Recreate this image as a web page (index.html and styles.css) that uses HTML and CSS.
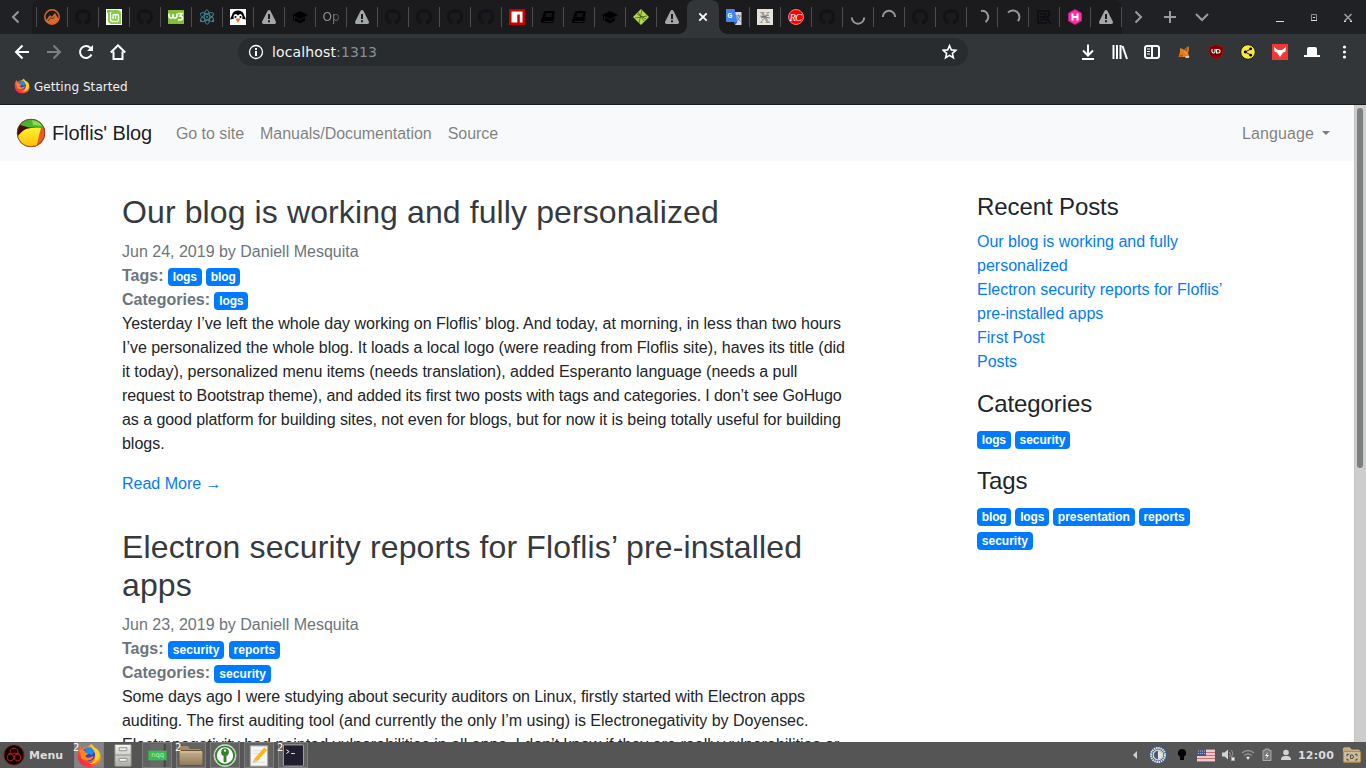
FILE: index.html
```html
<!DOCTYPE html>
<html lang="en">
<head>
<meta charset="utf-8">
<title>Floflis' Blog</title>
<link rel="stylesheet" href="styles.css">
</head>
<body>
<svg class="defs" width="0" height="0">
  <defs>
    <linearGradient id="fx" x1="1" y1="0" x2="0" y2="1"><stop offset="0" stop-color="#ffe92e"/><stop offset=".35" stop-color="#ff9a1c"/><stop offset=".7" stop-color="#ff3b3a"/><stop offset="1" stop-color="#e3166f"/></linearGradient>
    <linearGradient id="metal" x1="0" y1="0" x2="0" y2="1"><stop offset="0" stop-color="#f4f4f2"/><stop offset="1" stop-color="#aaaaa6"/></linearGradient>
    <linearGradient id="tan" x1="0" y1="0" x2="0" y2="1"><stop offset="0" stop-color="#c9b28e"/><stop offset="1" stop-color="#8e7a5d"/></linearGradient>
    <linearGradient id="yel" x1="0" y1="0" x2="0" y2="1"><stop offset="0" stop-color="#fff22e"/><stop offset="1" stop-color="#ffb800"/></linearGradient>
    <symbol id="github" viewBox="0 0 16 16"><path fill="#131314" d="M8 0C3.58 0 0 3.58 0 8c0 3.54 2.29 6.53 5.47 7.59.4.07.55-.17.55-.38v-1.49c-2.01.37-2.53-.49-2.69-.94-.09-.23-.48-.94-.82-1.13-.28-.15-.68-.52-.01-.53.63-.01 1.08.58 1.23.82.72 1.21 1.87.87 2.33.66.07-.52.28-.87.51-1.07-1.78-.2-3.64-.89-3.64-3.95 0-.87.31-1.59.82-2.15-.08-.2-.36-1.02.08-2.12 0 0 .67-.21 2.2.82a7.6 7.6 0 0 1 4 0c1.53-1.04 2.2-.82 2.2-.82.44 1.1.16 1.92.08 2.12.51.56.82 1.27.82 2.15 0 3.07-1.87 3.75-3.65 3.95.29.25.54.73.54 1.48v2.2c0 .21.15.46.55.38A8 8 0 0 0 16 8c0-4.42-3.58-8-8-8z"/></symbol>
    <symbol id="warn" viewBox="0 0 16 16"><path fill="#a4a7aa" fill-rule="evenodd" d="M8 1c.7 0 1.2.4 1.500 1l5.300 10.600c.6 1.300-.1 2.400-1.400 2.400H2.600c-1.300 0-2-1.100-1.400-2.400L6.500 2C6.800 1.400 7.300 1 8 1zM7 5v5h2V5zm0 6.200v2h2v-2z"/></symbol>
    <symbol id="cap" viewBox="0 0 16 16"><path fill="#000" d="M8 2l8 4-8 4-8-4zM3 8.500l5 2.500 5-2.500V12l-5 2.500L3 12zM1 6.500h1v5H1z"/></symbol>
    <symbol id="book" viewBox="0 0 16 16"><path fill="#000" d="M5 2h9l1 1-2.500 9H4c-1 0-1 1 0 1h8.500l1.500-5 .8.500-1.800 5.500H3c-2 0-2.500-1.500-2-2.500L4 3z"/><path stroke="#2a2a2b" d="M6 5h6M5.500 7h6"/></symbol>
    <symbol id="firefox" viewBox="0 0 24 24"><path fill="url(#fx)" d="M14 1c2 1 3 3 3.500 4C20 5 24 9 23 15c-1 5-5 8-11 8C5 23 1 18 1 12c0-4 1-7 3-9l1 3 3-2c3 0 4-1 6-3z"/><circle cx="11.500" cy="11" r="6.500" fill="#3a3fc0"/><path fill="#1c8cf0" d="M8 5.500c4-3 8-1 9 3l-2 3-6-2z"/><path fill="#ff8518" d="M3 7c4-1 5.500 0 5.500 2l3 1-3 2.500c2 3 5 1 8 0-1 5-9 6-12 2z"/><path fill="#ffcf2a" d="M14 1c0 4 4 6 4 11 0 5-2 7-6 8 9 1 12-8 9-12-2-4-5-3-7-7z"/></symbol>
    <symbol id="folder" viewBox="0 0 28 24"><path fill="#a18b69" stroke="#6f5e45" d="M2 5V3q0-1 1-1h8l2 3h11v4H2z"/><rect x="2" y="7" width="24" height="15" rx="1.500" fill="url(#tan)" stroke="#65573f"/><path d="M3 8.500h22" stroke="#d9c7a5"/></symbol>
    <symbol id="desk" viewBox="0 0 28 24"><path fill="#c5a97c" stroke="#e2c89c" d="M2 5V3q0-1 1-1h8l2 3h11v4H2z"/><rect x="2" y="7" width="24" height="15" rx="1.500" fill="#cbbda2" stroke="#b98a45" stroke-width="1.500"/><path d="M7 14v-3h3m8 0h3v3m0 3v2h-3m-8 0H7v-2" fill="none" stroke="#4b3e2a" stroke-width="1.300"/><path d="M12 12h2q2 0 2 2.500T14 17h-2z" fill="none" stroke="#4b3e2a" stroke-width="1.300"/></symbol>
  </defs>
</svg>

<header class="browser">
  <div class="tabstrip">
    <div class="scroll-left"><svg width="16" height="16" fill="none" stroke="#97999c" stroke-width="2"><path d="M10.500 2.500L5 8l5.500 5.500"/></svg></div>
    <div class="tabs">
      <div class="tab"><svg viewBox="0 0 16 16"><circle cx="8" cy="8" r="7.200" fill="none" stroke="#dc682e" stroke-width="1.500"/><path fill="#dc682e" d="M1.500 12L6 6l1.700 1.700L11 4l3.500 6-2 3.500L8 15l-4-1z"/><path d="M4 12l3-3.500L8.500 10l2-2.500" fill="none" stroke="#1b1b1d" stroke-width=".7"/></svg></div>
      <div class="tab"><svg><use href="#github"/></svg></div>
      <div class="tab"><svg viewBox="0 0 16 16"><path fill="#fff" d="M0 0h16v16H0z"/><path fill="#86cb43" d="M1 1h10q4 0 4 4v10H6q-4 0-4-4V4H1z"/><path d="M4.500 3v7q0 2.500 2.500 2.500h4q1.500 0 1.500-1.500V6.500q0-1-1.500-1t-1.500 1V10M10 6.500q0-1-1.500-1T7 6.500V10" fill="none" stroke="#fff" stroke-width="1.300"/></svg></div>
      <div class="tab"><svg><use href="#github"/></svg></div>
      <div class="tab"><svg viewBox="0 0 16 16"><path fill="#83bd38" d="M0 1h16v14H0z"/><path d="M1 4.500v2q0 2.500 2 2.500t2-2.500V5v1.500Q5 9 7 9t2-2.500v-2M10 4.500h4l-2 2.500q2.500 0 2.500 2T12 11h-2" fill="none" stroke="#fff" stroke-width="1.600"/></svg></div>
      <div class="tab"><svg viewBox="0 0 16 16" fill="none" stroke="#458b9b" stroke-width=".9"><ellipse cx="8" cy="8" rx="7.200" ry="2.700" transform="rotate(28 8 8)"/><ellipse cx="8" cy="8" rx="7.200" ry="2.700" transform="rotate(88 8 8)"/><ellipse cx="8" cy="8" rx="7.200" ry="2.700" transform="rotate(150 8 8)"/><circle cx="8" cy="8" r=".7"/><circle cx="2" cy="12" r=".8"/><circle cx="14" cy="12" r=".8"/></svg></div>
      <div class="tab"><svg viewBox="0 0 16 16"><path fill="#fff" d="M0 0h16v16H0z"/><path d="M0 10.500L2 6Q3 1.500 8 1.500T14 6l2 4.500-2.500-.5H2.500z"/><path fill="#fff" d="M3.500 8.500Q3.500 5 6 5l2 1.500L10 5q2.500 0 2.500 3.500 0 4-4.500 4.500-4.500-.5-4.500-4.500z"/><circle cx="5.500" cy="8" r="1"/><circle cx="10.500" cy="8" r="1"/><path fill="#ed7525" d="M5.500 9.500h5L8 14z"/></svg></div>
      <div class="tab"><svg><use href="#warn"/></svg></div>
      <div class="tab"><svg><use href="#cap"/></svg></div>
      <div class="tab tab-text">Op</div>
      <div class="tab"><svg><use href="#warn"/></svg></div>
      <div class="tab"><svg><use href="#github"/></svg></div>
      <div class="tab"><svg><use href="#github"/></svg></div>
      <div class="tab"><svg><use href="#github"/></svg></div>
      <div class="tab"><svg><use href="#github"/></svg></div>
      <div class="tab"><svg viewBox="0 0 16 16"><path fill="#c00" d="M0 0h16v16H0z"/><path fill="#fff" d="M2.500 2.500h11v11h-2.700V5.500H8.300v8H2.500z"/></svg></div>
      <div class="tab"><svg><use href="#book"/></svg></div>
      <div class="tab"><svg><use href="#book"/></svg></div>
      <div class="tab"><svg><use href="#cap"/></svg></div>
      <div class="tab"><svg viewBox="0 0 16 16"><path fill="#b6d84c" d="M8 0l8 8-8 8-8-8z"/><path fill="none" stroke="#42601f" stroke-width=".8" d="M5 3l6 9M2 9l12-2M9 1L6 14M4 5l9 5"/></svg></div>
      <div class="tab"><svg><use href="#warn"/></svg></div>
      <div class="tab active"><svg viewBox="0 0 16 16"><path d="M4.300 4.300l7.400 7.400m0-7.400l-7.400 7.400" stroke="#fff" stroke-width="1.900"/></svg></div>
      <div class="tab plain"><svg viewBox="0 0 16 16"><path fill="#d7dadd" d="M7 3h8.500v13H9z"/><path d="M9.500 7H15m-2.500-1.500V7m1.500 0q-1 4-4 5m1-4q1 3 3.500 4" stroke="#6a8792" fill="none"/><path fill="#4284f3" d="M0 0h8.500l3 13H1q-1 0-1-1z"/><path fill="#2b5fc0" d="M8 13h3.500L9 16z"/><text x="1.500" y="9" class="g-mark">G</text></svg></div>
      <div class="tab"><svg viewBox="0 0 16 16"><path fill="#e4e4df" d="M0 0h16v16H0z"/><text x="2" y="14" class="x-mark">X</text><path d="M3 7l10 2M4 9l8-3" stroke="#666" stroke-width=".8"/></svg></div>
      <div class="tab"><svg viewBox="0 0 16 16"><circle cx="8" cy="8" r="7.500" fill="#f00" stroke="#ff7272"/><text x="1.500" y="12" class="rc-mark">RC</text></svg></div>
      <div class="tab"><svg><use href="#github"/></svg></div>
      <div class="tab"><svg viewBox="0 0 16 16"><path class="spin" d="M1.800 8.500a6.200 6.200 0 0 0 12.400 0"/></svg></div>
      <div class="tab"><svg viewBox="0 0 16 16"><path class="spin" d="M1.800 8a6.200 6.200 0 0 1 12.400 0"/></svg></div>
      <div class="tab"><svg><use href="#github"/></svg></div>
      <div class="tab"><svg><use href="#github"/></svg></div>
      <div class="tab"><svg viewBox="0 0 16 16"><path class="spin" d="M7 1.900a6.200 6.200 0 0 1 4.500 11.200"/></svg></div>
      <div class="tab"><svg viewBox="0 0 16 16"><path class="spin" d="M3 3.700a6.200 6.200 0 0 1 9.800 8.500"/></svg></div>
      <div class="tab"><svg viewBox="0 0 16 16" fill="none" stroke="#0c0c0d" stroke-width="1.500"><path d="M11 14H2V2h11v5M4 5h7M4 8h4M4 11h3"/><circle cx="10" cy="9" r="2"/><path d="M11 10l4 5"/></svg></div>
      <div class="tab"><svg viewBox="0 0 16 16"><path fill="#ff2ea6" stroke="#c71886" d="M8 .5l6.500 3.700v7.600L8 15.500l-6.500-3.700V4.200z"/><path d="M5.500 4.500v7m5-7v7m-5-3.500h5" stroke="#fff" stroke-width="2"/></svg></div>
      <div class="tab"><svg><use href="#warn"/></svg></div>
    </div>
    <div class="tab-tools">
      <svg viewBox="0 0 16 16"><path d="M5.500 2.500L11 8l-5.500 5.500"/></svg>
      <svg viewBox="0 0 16 16"><path d="M8 2v12M2 8h12"/></svg>
      <svg viewBox="0 0 16 16"><path d="M2 5l6 6 6-6"/></svg>
    </div>
    <div class="window-buttons">
      <svg viewBox="0 0 16 16"><path d="M4 12.500h8" stroke="#ddd"/></svg>
      <svg viewBox="0 0 16 16"><path d="M5.500 5.500h5v6h-5z" stroke="#8b8e90"/><path d="M5 11.500h6M7 8.500h2" stroke="#ddd"/></svg>
      <svg viewBox="0 0 16 16"><path d="M4.500 5l7 7m0-7l-7 7" stroke="#9a9d9f" stroke-width="1.600"/><path d="M4 12.500h2m4 0h2" stroke="#ddd"/></svg>
    </div>
  </div>

  <div class="toolbar">
    <div class="tools">
      <svg viewBox="0 0 16 16" class="line"><path d="M15 8H2m6.500-6.500L2 8l6.500 6.500"/></svg>
      <svg viewBox="0 0 16 16" class="line dim"><path d="M1 8h13M7.500 1.500L14 8l-6.500 6.500"/></svg>
      <svg viewBox="0 0 16 16" class="line"><path d="M13.500 10.500A6 6 0 1 1 12.500 4"/><path d="M15 1v6H9z" fill="#fff" stroke="none"/></svg>
      <svg viewBox="0 0 16 16" class="line"><path d="M.8 8.500L8 1.300l7.200 7.200M3.500 7.500V15h9V7.500"/></svg>
    </div>
    <div class="urlbar">
      <svg viewBox="0 0 16 16"><circle cx="8" cy="8" r="6.500" fill="none" stroke="#fff" stroke-width="1.300"/><path d="M8 7v5M8 4v2" stroke="#fff" stroke-width="2"/></svg>
      <span class="url">localhost<span>:1313</span></span>
      <svg viewBox="0 0 16 16"><path d="M7.500 1.700l1.800 4.200 4.500.4-3.400 3 1 4.500-3.900-2.400-3.900 2.400 1-4.500-3.400-3 4.500-.4z" fill="none" stroke="#fff" stroke-width="1.600"/></svg>
    </div>
    <div class="tools">
      <svg viewBox="0 0 16 16" class="line"><path d="M8 .5V11M3 6.500l5 5 5-5M2 15h12"/></svg>
      <svg viewBox="0 0 16 16" class="line"><path d="M1.500 1v14M5 1v14M8.500 1v14M10.500 2l4.500 13"/></svg>
      <svg viewBox="0 0 16 16" class="line"><rect x="1" y="2" width="14" height="12" rx="2"/><path d="M8 2v12"/><path d="M3 5h3M3 7.500h3M3 10h3" stroke-width="1.200"/></svg>
      <svg viewBox="0 0 16 16"><path fill="#e87d20" d="M2.500 13L4 8V4l4 1.500L12.500 2l.5 3-1 4 1.500 4H5z"/><path fill="#a3551c" d="M7 6l5-3-1 4zM3 12l4-2-1 3z"/><path fill="#dac8b5" d="M9.500 12H13v2H9.500z"/><path d="M8 7l3 3" stroke="#f0ac55"/></svg>
      <svg viewBox="0 0 16 16"><path fill="#800000" stroke="#a01c1c" stroke-width=".6" d="M8 .5q3 2 7 2V7q0 6-7 8.500Q1 13 1 7V2.500q4 0 7-2z"/><path d="M4 5v2.500q0 1.500 1.500 1.500T7 7.500V5m1.600.5h1.500q2 0 2 1.700T10.200 9H8.600z" fill="none" stroke="#fff" stroke-width="1.100"/></svg>
      <svg viewBox="0 0 16 16"><circle cx="8" cy="8" r="7.300" fill="#fae93d" stroke="#1a1a1a"/><path d="M11 5L5 8l6 3" fill="none" stroke="#222"/><circle cx="10.700" cy="4.800" r="1.400"/><circle cx="5.200" cy="8" r="1.400"/><circle cx="10.700" cy="11.200" r="1.400"/></svg>
      <svg viewBox="0 0 16 16"><path fill="#ef3939" d="M0 0h16v16H0z"/><path fill="#fff" d="M2 3l4 3h4l4-3-.5 4.500-2.500 1L8 13 5 8.500l-2.500-1z"/></svg>
      <svg viewBox="0 0 16 16"><path fill="#fff" d="M3 11V5q0-2 2-2h6q2 0 2 2v6h3v2H0v-2z"/></svg>
      <svg viewBox="0 0 16 16" fill="#fff"><circle cx="8.500" cy="3" r="1.600"/><circle cx="8.500" cy="8" r="1.600"/><circle cx="8.500" cy="13" r="1.600"/></svg>
    </div>
  </div>
  <div class="bookmarks"><svg><use href="#firefox"/></svg><span>Getting Started</span></div>
</header>

<div class="viewport">
  <div class="page">
    <nav class="navbar">
      <a class="brand"><svg viewBox="0 0 30 30"><defs><clipPath id="ball"><circle cx="15" cy="15" r="14"/></clipPath></defs><g clip-path="url(#ball)"><path fill="#460a0c" d="M0 0h30v30H0z"/><path fill="#ed5a20" d="M20 8h10v22H18z"/><path fill="#47b52a" d="M4 7Q9 0 16 0q8 0 12 8l-3 2-12-.5z"/><path fill="#8edb55" d="M16 2l7 2 3 4-9-1z"/><path fill="url(#yel)" d="M10 11q7-2 15-1-2 7-3 12l-2 9H0V21q4-7 10-10z"/></g><circle cx="15" cy="15" r="13.800" fill="none" stroke="#8b3434" stroke-width=".8"/></svg><span>Floflis' Blog</span></a>
      <a>Go to site</a><a>Manuals/Documentation</a><a>Source</a>
      <a class="language">Language</a>
    </nav>
    <div class="container">
      <main>
        <article>
          <h2>Our blog is working and fully personalized</h2>
          <div class="meta">Jun 24, 2019 by Daniell Mesquita<br><b>Tags:</b> <a class="badge short">logs</a> <a class="badge short">blog</a><br><b>Categories:</b> <a class="badge short">logs</a></div>
          <p>Yesterday I’ve left the whole day working on Floflis’ blog. And today, at morning, in less than two hours<br>I’ve personalized the whole blog. It loads a local logo (were reading from Floflis site), haves its title (did<br>it today), personalized menu items (needs translation), added Esperanto language (needs a pull<br><span class="tighter">request to Bootstrap theme), and added its first two posts with tags and categories. I don’t see GoHugo</span><br><span class="tight">as a good platform for building sites, not even for blogs, but for now it is being totally useful for building</span><br>blogs.</p>
          <a class="more">Read More →</a>
        </article>
        <article>
          <h2 class="wide">Electron security reports for Floflis’ pre-installed apps</h2>
          <div class="meta">Jun 23, 2019 by Daniell Mesquita<br><b>Tags:</b> <a class="badge">security</a> <a class="badge">reports</a><br><b>Categories:</b> <a class="badge">security</a></div>
          <p><span class="tight">Some days ago I were studying about security auditors on Linux, firstly started with Electron apps</span><br>auditing. The first auditing tool (and currently the only I’m using) is Electronegativity by Doyensec.<br><span class="loose">Electronegativity had pointed vulnerabilities in all apps. I don’t know if they are really vulnerabilities or</span></p>
        </article>
      </main>
      <aside>
        <section>
          <h4>Recent Posts</h4>
          <ul>
            <li><a>Our blog is working and fully personalized</a></li>
            <li><a>Electron security reports for Floflis’ pre-installed apps</a></li>
            <li><a>First Post</a></li>
            <li><a>Posts</a></li>
          </ul>
        </section>
        <section>
          <h4>Categories</h4>
          <div class="badges"><a class="badge short">logs</a> <a class="badge">security</a></div>
        </section>
        <section>
          <h4>Tags</h4>
          <div class="badges"><a class="badge short">blog</a> <a class="badge short">logs</a> <a class="badge">presentation</a> <a class="badge">reports</a> <a class="badge">security</a></div>
        </section>
      </aside>
    </div>
  </div>
  <div class="scrollbar"><div class="thumb"></div></div>
</div>

<footer class="taskbar">
  <div class="menu"><svg viewBox="0 0 22 22"><circle cx="11" cy="11" r="10" fill="#090202" stroke="#a10c0c" stroke-dasharray="2 1"/><g fill="none" stroke="#c01515"><path d="M7.500 10a4 4 0 1 1 7 0M5 10q6-2 12 0"/><circle cx="7.500" cy="13.500" r="3.300"/><circle cx="14.500" cy="13.500" r="3.300"/></g></svg>Menu</div>
  <div class="launchers">
    <div class="task current"><i>2</i><svg><use href="#firefox"/></svg></div>
    <div class="task bare"><svg viewBox="0 0 26 26"><rect x="4.500" y="1.500" width="17" height="23" rx="1" fill="url(#metal)" stroke="#80807c"/><path d="M5 12.500h16" stroke="#888"/><path d="M9 5h8v3H9zm0 11h8v3H9z" fill="#f4f4f2" stroke="#8c8c88"/></svg></div>
    <div class="task"><svg viewBox="0 0 26 26"><path fill="#696969" d="M6 1h15v24H6z"/><path fill="#444" d="M20 1h2v24h-2z"/><path fill="#39bd51" d="M4 8h19v10H4z"/><text x="7" y="15" class="nqq">nqq</text></svg></div>
    <div class="task"><i>2</i><svg class="wide-icon"><use href="#folder"/></svg></div>
    <div class="task"><svg viewBox="0 0 26 26"><circle cx="13" cy="13" r="11.500" fill="#fff" stroke="#bbb"/><circle cx="13" cy="13" r="9.500" fill="none" stroke="#318329" stroke-width="2"/><circle cx="13" cy="9.500" r="4" fill="#318329"/><path fill="#318329" d="M11.500 12h3v7L13 20.500 11.500 19z"/><circle cx="13" cy="8" r="1.200" fill="#fff"/></svg></div>
    <div class="task"><svg viewBox="0 0 26 26"><rect x="4" y="3" width="18" height="21" fill="#f5f5f3" stroke="#aaa"/><path d="M7 8h10M7 11h8M7 20h12" stroke="#ddd"/><path d="M9.500 18L20 6" stroke="#f8b81c" stroke-width="4"/><path fill="#e5c595" d="M8 16l3 3-5 2.500z"/></svg></div>
    <div class="task"><i>2</i><svg viewBox="0 0 26 26"><rect x="3" y="2" width="21" height="22" rx="1" fill="#211e30" stroke="#aaa"/><path d="M6 7l3 2-3 2m5 0h4" stroke="#eee" fill="none"/></svg></div>
  </div>
  <div class="tray">
    <svg width="6" height="10"><path fill="#d0d0d0" d="M5 1v8L1 5z"/></svg>
    <svg class="gear" width="20" height="20" viewBox="0 0 20 20"><circle cx="10" cy="10" r="9.500" fill="#445b7d"/><circle cx="10" cy="10" r="7" fill="none" stroke="#e9e9dc" stroke-width="2" stroke-dasharray="1.500 .7"/><circle cx="10" cy="10" r="4.800" fill="none" stroke="#e9e9dc" stroke-width="1.200"/><path fill="#e9e9dc" d="M10 6a4 4 0 0 1 0 8z"/></svg>
    <svg class="bulb" width="10" height="14"><path d="M5 1a4 4 0 0 1 2 7.500V12H3V8.500A4 4 0 0 1 5 1z"/></svg>
    <svg class="flag" width="18" height="13"><path fill="#f0eded" d="M0 0h18v13H0z"/><path d="M0 .5h18M0 3.500h18M0 6.500h18M0 9.500h18M0 12.500h18" stroke="#d46b70" stroke-width="1.500"/><path fill="#455789" d="M0 0h9v7H0z"/><path d="M1 2h7M1 4.500h7" stroke="#aeb7d0" stroke-dasharray="1"/></svg>
    <svg class="sound" width="14" height="14"><path fill="#d2d2d2" d="M0 4.500h2.500L6 1.500v10l-3.500-3H0z"/><path d="M7.500 4q2 3 0 5m2-7q3 4 0 7" stroke="#999" fill="none"/><path d="M9.500 9.500l3 3m0-3l-3 3" stroke="#eee" stroke-width="1.500"/></svg>
    <svg class="wifi" width="14" height="12" fill="none"><path d="M1 4q6-5 12 0M3 6.500q4-3 8 0" stroke="#939393" stroke-width="1.500"/><path d="M5 8q2-1 4 0l-2 3z" fill="#ddd"/></svg>
    <svg class="battery" width="10" height="14"><path d="M3 1h4v1.500h2v10H1v-10h2z" fill="#777" stroke="#aaa"/><path d="M6 4L3 8h2l-1 3 3-4H5z" fill="#fff"/></svg>
    <svg class="user" width="12" height="12" fill="#d3d3d3"><circle cx="6" cy="3.500" r="2.800"/><path d="M1 11q0-4 4-4h2q4 0 4 4z"/></svg>
    <span class="clock">12:00</span>
    <svg class="desk" width="20" height="18"><use href="#desk"/></svg>
  </div>
</footer>
</body>
</html>
```
FILE: styles.css
```css
* { box-sizing: border-box; }
body {
  margin: 0;
  width: 1366px;
  height: 768px;
  overflow: hidden;
  display: flex;
  flex-direction: column;
  font-family: "Liberation Sans", Arial, sans-serif;
  color: #212529;
  background: #fff;
}
svg { display: block; flex: none; }
.defs { position: absolute; }

/* Browser chrome */
.browser {
  flex: none;
  height: 105px;
  background: #323639;
  border-bottom: 1px solid #1c1c1e;
  font-family: "DejaVu Sans", sans-serif;
}
.tabstrip { display: flex; height: 34px; background: #202124; }
.scroll-left { width: 32px; display: flex; align-items: center; justify-content: center; }
.tabs {
  width: 1090px;
  padding-left: 4px;
  display: flex;
  background: #1b1b1d;
  border-radius: 8px 8px 0 0;
}
.tab {
  flex: none;
  width: 31px;
  display: flex;
  align-items: center;
  justify-content: center;
  background: linear-gradient(#4b4c4e, #4b4c4e) 0 7px / 1px 20px no-repeat;
  padding-left: 1px;
}
.tab:last-child {
  width: 32px;
  padding-right: 1px;
  background: linear-gradient(#4b4c4e, #4b4c4e) 0 7px / 1px 20px no-repeat, linear-gradient(#4b4c4e, #4b4c4e) 31px 7px / 1px 20px no-repeat;
}
.tab svg { width: 16px; height: 16px; }
.tab.plain { background: none; }
.tab.active {
  position: relative;
  width: 32px;
  margin-right: -1px;
  padding: 0 1px 0 0;
  background: #323639;
  border-radius: 8px 8px 0 0;
}
.tab.active::before, .tab.active::after {
  content: "";
  position: absolute;
  bottom: 0;
  width: 8px;
  height: 8px;
}
.tab.active::before { left: -8px; background: radial-gradient(circle at 0 0, transparent 7.5px, #323639 8px); }
.tab.active::after { right: -8px; background: radial-gradient(circle at 100% 0, transparent 7.5px, #323639 8px); }
.tab-text {
  font-size: 12px;
  color: #8b9197;
  -webkit-mask-image: linear-gradient(90deg, #000 50%, rgba(0, 0, 0, .35) 80%);
}
.g-mark { font: bold 7px Roboto, sans-serif; fill: #fff; }
.x-mark { font: bold 16px "Liberation Serif", serif; fill: #a79b8d; }
.rc-mark { font: italic 10.5px "Liberation Serif", serif; fill: #fff; letter-spacing: -1px; }
.spin { fill: none; stroke: #94979b; stroke-width: 2; }
.tab-tools { display: flex; align-items: center; gap: 16px; padding-left: 8px; fill: none; stroke: #9a9c9f; stroke-width: 2; }
.tab-tools svg, .window-buttons svg { width: 16px; height: 16px; }
.window-buttons { margin-left: auto; margin-right: 10px; display: flex; align-items: center; gap: 18px; fill: none; }

.toolbar { height: 36px; padding: 4px 6px; display: flex; align-items: stretch; }
.tools { display: flex; align-items: center; }
.tools svg { width: 16px; height: 16px; margin: 0 8px; }
.line { fill: none; stroke: #fff; stroke-width: 2; }
.dim { stroke: #7d8082; }
.urlbar {
  width: 730px;
  margin: 0 104px;
  padding: 0 10px;
  display: flex;
  align-items: center;
  background: #282c2f;
  border-radius: 14px;
}
.urlbar svg { width: 16px; height: 16px; }
.url { flex: 1; padding-left: 8px; font-size: 14px; letter-spacing: .14px; color: #f5f5f5; }
.url span { color: #8c8f91; }
.bookmarks { height: 32px; padding-left: 14px; display: flex; align-items: center; gap: 4px; font-size: 12px; letter-spacing: .06px; color: #f0f0f0; }
.bookmarks span { padding-top: 1px; }
.bookmarks svg { width: 16px; height: 16px; }

/* Blog */
.viewport { flex: 1; min-height: 0; display: flex; overflow: hidden; font-size: 16px; line-height: 24px; }
.page { width: 1354px; height: 637px; overflow: hidden; }
.navbar { height: 56px; padding: 0 16px; display: flex; align-items: center; background: #f8f9fa; }
.navbar a { padding: 2px 8px 0; letter-spacing: -.04px; color: rgba(0, 0, 0, .5); }
.navbar .brand { display: flex; align-items: center; gap: 6px; padding: 0; margin-right: 16px; font-size: 20px; letter-spacing: -.13px; color: rgba(0, 0, 0, .9); }
.brand svg { width: 30px; height: 30px; }
.navbar .language { margin-left: auto; letter-spacing: .1px; }
.language::after {
  content: "";
  display: inline-block;
  margin-left: 8px;
  vertical-align: 4px;
  border: 4.8px solid transparent;
  border-top-color: currentColor;
  border-bottom: 0;
}
.container { width: 1140px; margin: 0 auto; padding: 32.4px 15px 0; display: flex; justify-content: space-between; }
main { width: 730px; }
aside { width: 255px; }
article { margin-bottom: 32px; }
h2, h4 { margin: 0 0 8px; font-weight: 400; line-height: 1.2; }
h2 { font-size: 32px; letter-spacing: .11px; color: #343a40; }
h2.wide { letter-spacing: .14px; }
h4 { font-size: 24px; letter-spacing: -.1px; }
.meta { color: #6c757d; }
p { margin: 0 0 16px; letter-spacing: -.025px; white-space: nowrap; }
.tight { letter-spacing: -.055px; }
.tighter { letter-spacing: -.095px; }
.loose { letter-spacing: .02px; }
.more, li a { color: #007bff; }
.more { display: block; }
ul { margin: 0; padding: 0; list-style: none; }
section { margin-bottom: 16px; }
.badge {
  display: inline-block;
  padding: .25em .4em;
  font-size: 12px;
  font-weight: 700;
  line-height: 1;
  vertical-align: baseline;
  border-radius: 4px;
  color: #fff;
  background: #007bff;
}
.badges { word-spacing: -.45px; }
.badge.short { letter-spacing: -.15px; }
.meta .badge:not(.short) { letter-spacing: .08px; }
.scrollbar { width: 12px; padding: 3px 3px 3px 2px; background: #cdcdcd; border-left: 1px solid #c4c4c0; }
.thumb { width: 6px; height: 360px; border-radius: 3px; background: #7c7f7f; }

/* Desktop panel */
.taskbar {
  flex: none;
  height: 26px;
  display: flex;
  align-items: center;
  background: #555;
  color: #dcdcdc;
  font: bold 11px "DejaVu Sans", sans-serif;
}
.menu { width: 74px; padding-left: 3px; display: flex; align-items: center; gap: 4px; }
.menu svg { width: 22px; height: 22px; }
.launchers { display: flex; gap: 4px; }
.task {
  position: relative;
  width: 30px;
  height: 26px;
  display: flex;
  align-items: center;
  justify-content: center;
  background: #626262;
  border: 1px solid #7d7d7d;
}
.task.current { background: #858585; }
.task.bare { background: none; border-color: transparent; }
.task svg { width: 26px; height: 25px; }
.task svg.wide-icon { width: 28px; }
.task i { position: absolute; z-index: 1; left: -2px; top: -1px; font: 10px "DejaVu Sans", sans-serif; color: #fff; }
.nqq { font: 7px "DejaVu Sans", sans-serif; fill: #b9f0c2; }
.tray { margin-left: auto; padding-right: 4px; display: flex; align-items: center; }
.gear { margin-left: 10px; }
.bulb { margin-left: 9px; }
.flag { margin-left: 10px; }
.sound { margin-left: 7px; }
.wifi { margin-left: 5px; }
.battery { margin-left: 7px; }
.user { margin-left: 8px; }
.clock { margin-left: 6px; width: 39px; letter-spacing: .2px; }
.desk { margin-left: 5px; }
```
